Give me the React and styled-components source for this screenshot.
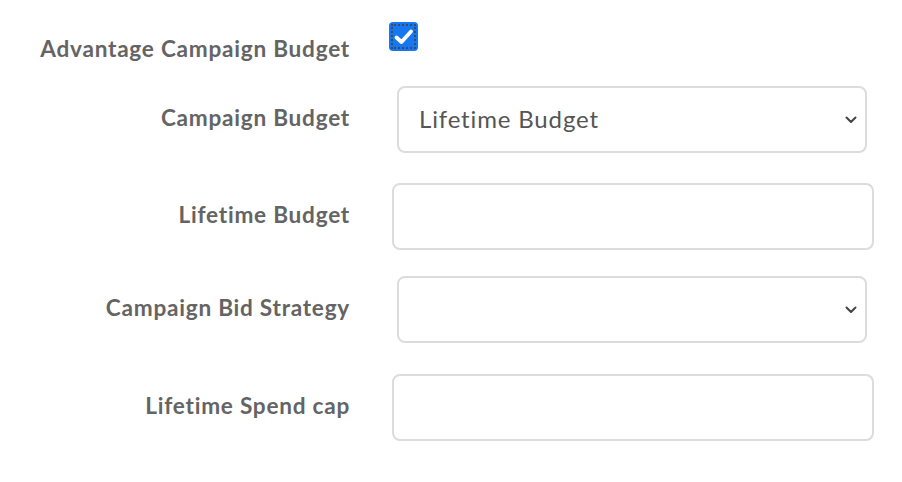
import React from "react";
import styled, { createGlobalStyle } from "styled-components";

const Global = createGlobalStyle`
  html, body { margin: 0; padding: 0; background: #fff; }
  body { font-family: Lato, "Open Sans", sans-serif; }
`;

const Form = styled.div`
  display: flex;
  flex-direction: column;
  padding-top: 22px;
  width: 902px;
`;

const Row = styled.div`
  display: grid;
  grid-template-columns: 350px 1fr;
  align-items: ${(p) => (p.$top ? "start" : "center")};
  margin-top: ${(p) => p.$mt || 0}px;
`;

const Label = styled.div`
  text-align: right;
  font-weight: 700;
  font-size: 22.6px;
  letter-spacing: 0.75px;
  color: #646464;
  padding-right: 0px;
  transform: translateY(${(p) => p.$dy || -2}px);
  white-space: nowrap;
`;

const Control = styled.div`
  display: flex;
  padding-left: ${(p) => p.$pl}px;
`;

const CheckBox = styled.div`
  position: relative;
  width: 29px;
  height: 29px;
  border-radius: 4px;
  background: #1677f2;
  display: flex;
  align-items: center;
  justify-content: center;
  margin-left: 39px;
  &::after {
    content: "";
    position: absolute;
    inset: 2px;
    border: 2px dotted #3b4a63;
    border-radius: 1px;
  }
`;

const Field = styled.div`
  box-sizing: border-box;
  width: ${(p) => p.$w}px;
  height: ${(p) => p.$h}px;
  border: 2px solid #dcdcdc;
  border-radius: 8px;
  background: #fff;
  display: flex;
  align-items: center;
  padding: 0 8px 0 20px;
  font-size: 24px;
  letter-spacing: 0.85px;
  color: #555;
`;

const Value = styled.span`
  flex: 1;
  transform: translateY(-1px);
`;

const Chevron = () => (
  <svg width="12" height="8" viewBox="0 0 12 8">
    <path d="M1.5 1.5 L6 6 L10.5 1.5" fill="none" stroke="#444" strokeWidth="2" strokeLinecap="round" strokeLinejoin="round" />
  </svg>
);

const Select = ({ value }) => (
  <Field $w={470} $h={67}>
    <Value>{value}</Value>
    <Chevron />
  </Field>
);

const Input = () => <Field $w={482} $h={67} />;

export default function App() {
  return (
    <>
      <Global />
      <Form>
        <Row $top>
          <Label $dy={13}>Advantage Campaign Budget</Label>
          <Control $pl={0}>
            <CheckBox>
              <svg width="22" height="18" viewBox="0 0 22 18">
                <path d="M3.5 9.5 L8.5 14 L18 3.5" fill="none" stroke="#fff" strokeWidth="3.8" strokeLinecap="round" strokeLinejoin="round" />
              </svg>
            </CheckBox>
          </Control>
        </Row>
        <Row $mt={35}>
          <Label>Campaign Budget</Label>
          <Control $pl={47}>
            <Select value="Lifetime Budget" />
          </Control>
        </Row>
        <Row $mt={30}>
          <Label>Lifetime Budget</Label>
          <Control $pl={42}>
            <Input />
          </Control>
        </Row>
        <Row $mt={26}>
          <Label>Campaign Bid Strategy</Label>
          <Control $pl={47}>
            <Select value="" />
          </Control>
        </Row>
        <Row $mt={31}>
          <Label>Lifetime Spend cap</Label>
          <Control $pl={42}>
            <Input />
          </Control>
        </Row>
      </Form>
    </>
  );
}
